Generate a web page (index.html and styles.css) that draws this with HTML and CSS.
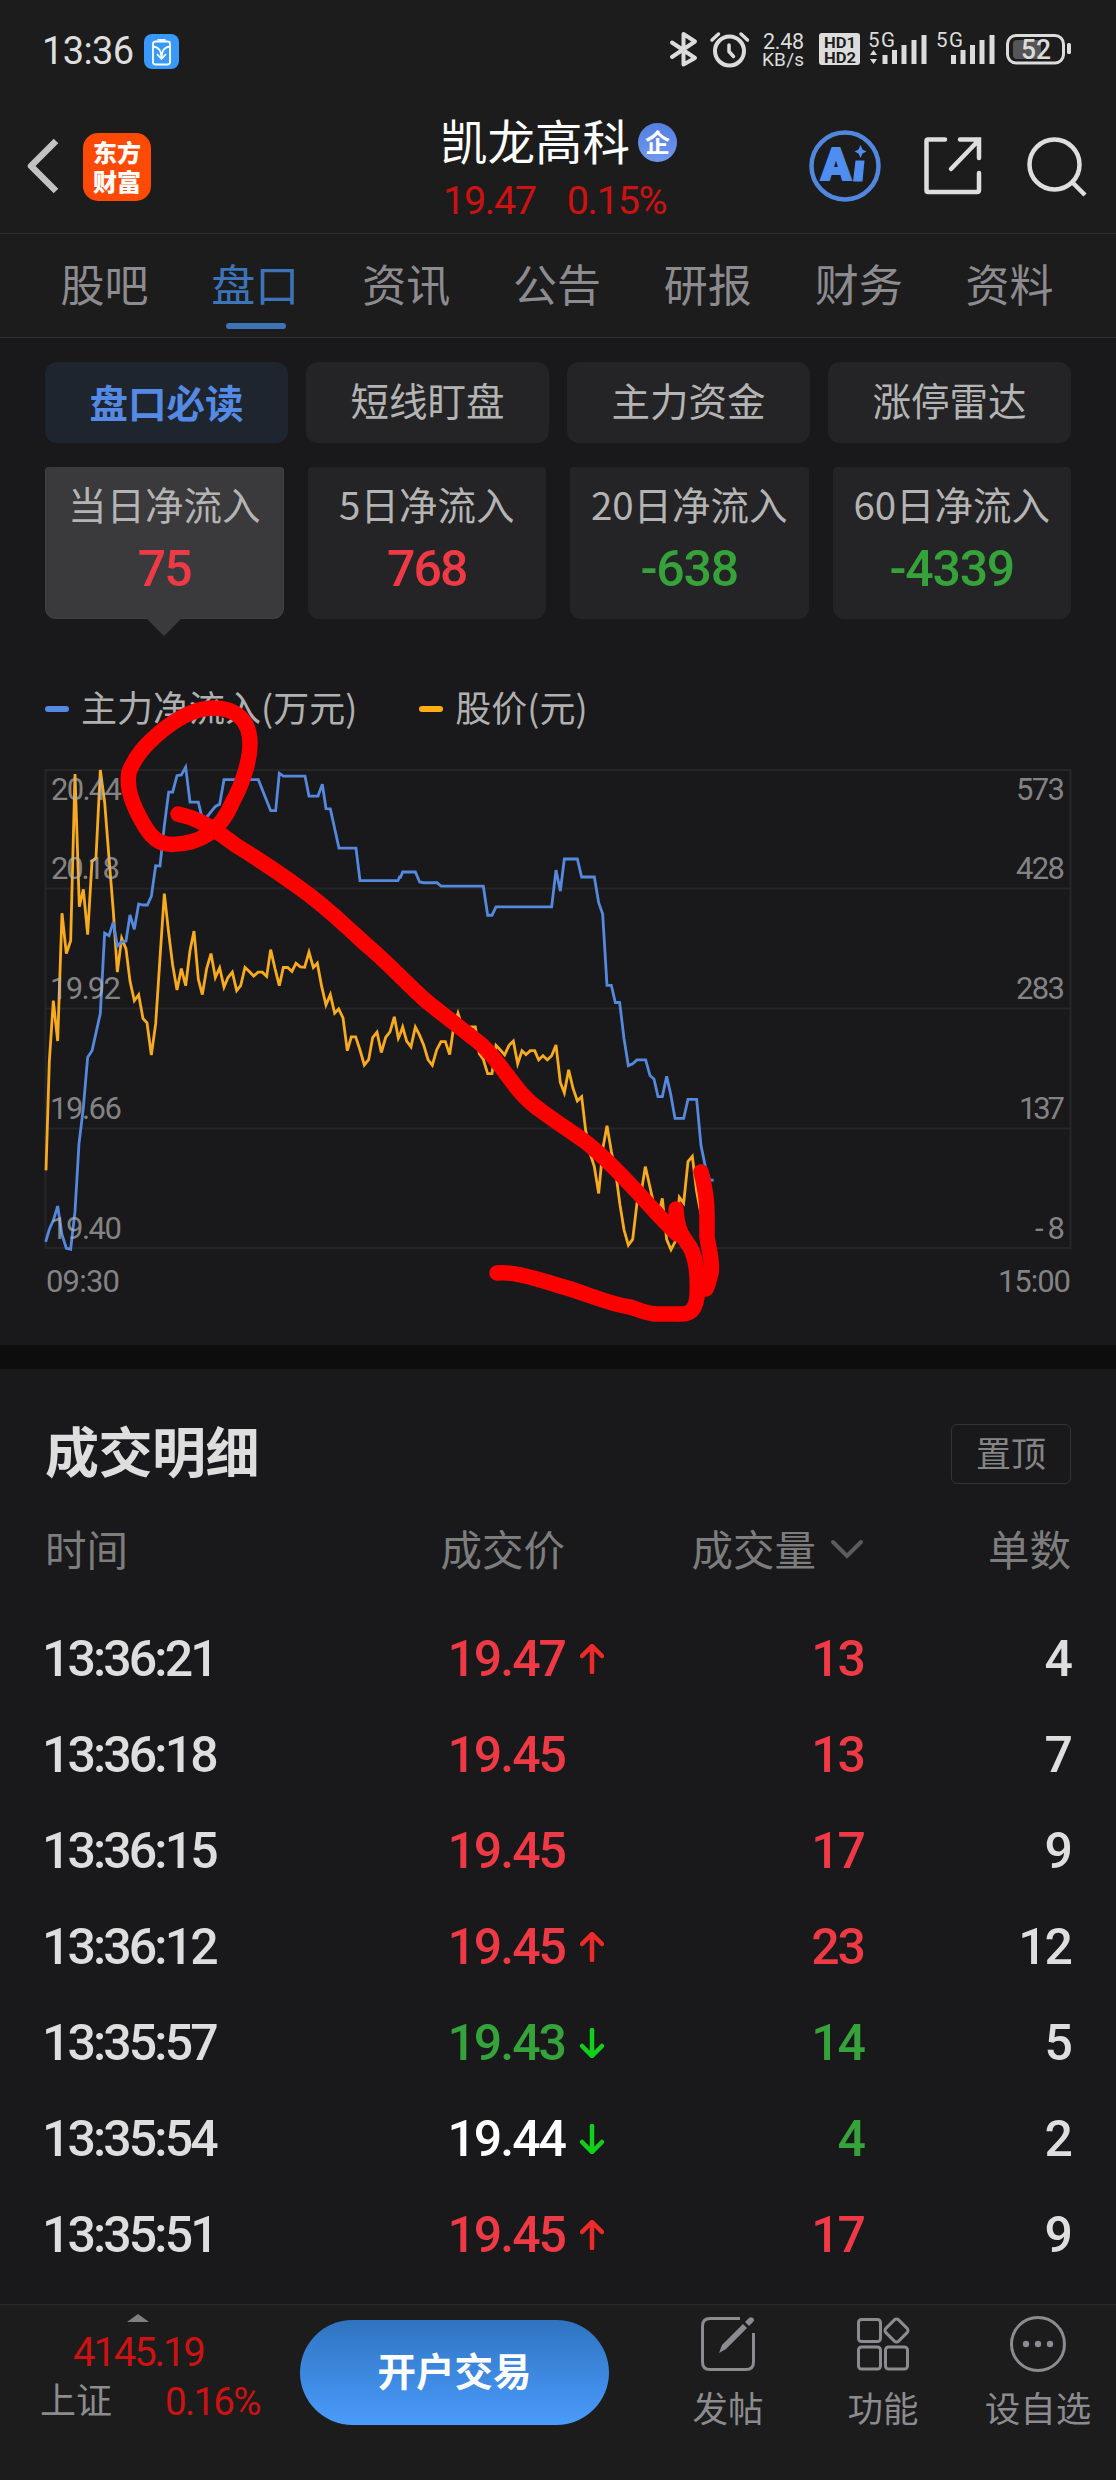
FILE: index.html
```html
<!DOCTYPE html>
<html lang="zh-CN">
<head>
<meta charset="utf-8">
<title>凯龙高科</title>
<link rel="stylesheet" href="styles.css">
</head>
<body>
<header class="top">
  <div class="status">
    <span class="clock">13:36</span>
    <svg class="charge" width="35" height="35" viewBox="0 0 35 35"><rect width="35" height="35" rx="8" fill="#3898fb"/><rect x="9" y="7.5" width="17" height="23" rx="2.5" fill="none" stroke="#fff" stroke-width="1.800"/><path d="M13.500 5.800h8M9.500 12.500c5 .5 8 4 8 12M25.500 12.500c-5 .5-8 4-8 12M13 20l4.500 5 4.500-5" fill="none" stroke="#fff" stroke-width="1.800"/></svg>
    <svg class="indicators" width="406" height="52" viewBox="668 19 406 52">
      <g fill="none" stroke="#dcdcdc" stroke-width="4" stroke-linecap="round" stroke-linejoin="round">
        <path d="M672 42.500L695 58L683.500 64.500V34L695 41.500L672 57"/>
        <circle cx="729.500" cy="51" r="14.500"/>
        <path d="M712 40l6.500-6M741 34l6.500 6M729 45v6.500l4.500 5" stroke-width="3.500"/>
        <rect x="1007.500" y="35.500" width="56" height="27.500" rx="8.500" stroke-width="3"/>
      </g>
      <rect x="1013" y="40" width="28" height="19" rx="4" fill="#555"/>
      <rect x="1067" y="43" width="4" height="11" rx="1.500" fill="#dcdcdc"/>
      <rect x="819" y="33" width="41" height="32" rx="3" fill="#dcdcdc"/>
      <g fill="#dcdcdc">
        <path d="M870 55l3.500-5 3.500 5zM870 59l3.500 5 3.500-5z"/>
        <path d="M882.500 55h5v9h-5zM892 50h5v14h-5zM901.500 45h5v19h-5zM911.500 40h5v24h-5zM921.500 35h5v29h-5z"/>
        <path d="M951 55h5v9h-5zM960.500 50h5v14h-5zM970 45h5v19h-5zM979.500 40h5v24h-5zM989.500 35h5v29h-5z"/>
        <text x="763" y="48.500" font-size="21.500" textLength="41">2.48</text>
        <text x="762" y="66" font-size="19" textLength="42">KB/s</text>
        <text x="868" y="46.500" font-size="20.500" textLength="27">5G</text>
        <text x="936" y="46.500" font-size="20.500" textLength="27">5G</text>
        <text x="1021" y="59" font-size="27.500" font-weight="500" textLength="30" lengthAdjust="spacingAndGlyphs">52</text>
      </g>
      <g fill="#1c1c1c" font-size="15" font-weight="700">
        <text x="824" y="47.500" textLength="32" lengthAdjust="spacingAndGlyphs">HD1</text>
        <text x="824" y="62.500" textLength="32" lengthAdjust="spacingAndGlyphs">HD2</text>
      </g>
    </svg>
  </div>
  <div class="titlebar">
    <svg class="back" width="36" height="60" viewBox="0 0 36 60"><path d="M33 5L8 30L33 55" fill="none" stroke="#c2c2c2" stroke-width="6.500" stroke-linejoin="round"/></svg>
    <div class="logo"><span>东方</span><span>财富</span></div>
    <div class="stock">
      <div class="name">凯龙高科<span class="badge">企</span></div>
      <div class="quote"><span>19.47</span><span>0.15%</span></div>
    </div>
    <svg class="ai" width="74" height="74" viewBox="0 0 74 74"><circle cx="37" cy="37" r="33.500" fill="none" stroke="#5187de" stroke-width="4.500"/><text x="13" y="51" font-size="44" font-weight="900" fill="#4f8df0" stroke="#4f8df0" stroke-width="2" textLength="30" lengthAdjust="spacingAndGlyphs">A</text><path d="M47.500 31.500h9l-2 21h-9.500zM52.500 16l2 4.500 4 2-4 2-2 4.500-2-4.500-4-2 4-2z" fill="#4f8df0"/></svg>
    <svg class="share" width="62" height="62" viewBox="0 0 62 62"><path d="M23 4.500H6Q4.500 4.500 4.500 6V55.500Q4.500 57 6 57H55Q57 57 57 55V38M38 4.500H57V23M55 7L29 34" fill="none" stroke="#dedede" stroke-width="4.500" stroke-linecap="round"/></svg>
    <svg class="search" width="64" height="64" viewBox="0 0 64 64"><circle cx="29.500" cy="29.500" r="25" fill="none" stroke="#dedede" stroke-width="4.500"/><path d="M48 48L60 60" stroke="#dedede" stroke-width="4.500"/></svg>
  </div>
  <nav class="tabs"><span>股吧</span><span class="on">盘口</span><span>资讯</span><span>公告</span><span>研报</span><span>财务</span><span>资料</span></nav>
</header>
<main>
  <div class="pills"><span class="on">盘口必读</span><span>短线盯盘</span><span>主力资金</span><span>涨停雷达</span></div>
  <div class="cards">
    <div class="card on"><span>当日净流入</span><b class="up">75</b></div>
    <div class="card"><span>5日净流入</span><b class="up">768</b></div>
    <div class="card"><span>20日净流入</span><b class="down">-638</b></div>
    <div class="card"><span>60日净流入</span><b class="down">-4339</b></div>
  </div>
  <div class="legend"><i class="flow"></i><span>主力净流入(万元)</span><i class="price"></i><span>股价(元)</span></div>
  <div class="chart">
    <svg width="1116" height="636" viewBox="0 700 1116 636">
      <path d="M45.500 770H1070.500V1248H45.500ZM45 888.500H1071M45 1008.500H1071M45 1128.500H1071" fill="none" stroke="#262628" stroke-width="2"/>
      <g class="series">
        <g stroke="#f8ab20">
          <polyline transform="translate(30 740) scale(.33333 .35714)" points="48,1205 58,900 70,730 83,843 96,485 109,598 122,562 135,95 148,467 160,418 173,545 186,340 198,330 211,84 224,175 237,330 250,480 262,650 275,555 288,585 300,675 313,730 326,713 339,780 351,792 364,882 377,795 390,610 403,430 416,540 428,630 441,700 454,640 467,688 480,590 492,535 505,670 517,713 530,640 543,598 556,665 569,638 582,692 594,665 607,650 620,702 632,688 645,637 658,648 671,661 684,650 697,650 710,662 722,587 735,640 748,688 760,637 773,637 786,648 798,625 811,635 824,636 837,594 850,637 862,625 875,690 888,742 901,713 914,765 926,753 939,778 952,870 964,831 977,831 990,868 1003,910 1016,895 1028,833 1041,818 1054,875 1067,833 1080,817 1093,775 1105,835 1110,825"/>
          <polyline transform="translate(400 740) scale(.33333 .38265)" points="0,770 8,750 20,787 33,802 46,750 58,770 71,797 84,835 97,850 110,810 123,788 136,788 149,822 161,750 174,714 187,750 200,765 213,750 226,750 238,820 250,835 263,872 276,872 288,798 301,810 314,823 327,798 340,787 353,846 366,812 378,822 391,812 404,812 416,836 429,825 442,836 455,825 468,797 481,895 493,922 506,862 519,910 532,943 545,932 557,1020 570,1080 583,1115 596,1185 609,1065 621,1008 634,1075 647,1130 660,1215 672,1280 685,1320 698,1305 711,1210 724,1180 736,1115 749,1165 762,1215 775,1240 787,1198 800,1305 813,1332 826,1310 838,1195 851,1210 864,1102 877,1088 890,1180 903,1240"/>
        </g>
        <g stroke="#5589dd">
          <polyline transform="translate(30 740) scale(.33333 .35714)" points="47,1405 58,1370 70,1345 83,1305 96,1385 109,1423 122,1426 135,1320 147,1130 160,1030 173,888 186,870 198,820 211,765 224,541 237,548 250,510 262,577 275,565 288,563 300,490 313,530 326,459 339,462 352,462 364,438 377,352 390,353 403,240 416,146 428,146 441,100 454,98 467,76 480,174 505,174 518,225 530,216 556,186 569,180 582,111 685,111 722,198 737,198 748,93 760,101 825,101 837,157 864,157 877,124 888,192 901,193 927,303 978,303 990,394 1104,394 1110,380"/>
          <polyline transform="translate(400 740) scale(.33333 .38265)" points="0,362 8,345 46,345 59,371 71,373 111,373 123,382 250,382 263,458 276,458 288,436 455,436 468,340 481,395 493,311 532,311 545,358 583,358 596,425 608,455 621,641 634,641 646,686 659,686 672,780 685,851 698,846 711,836 737,836 750,877 762,886 774,932 787,932 800,879 812,925 825,989 851,989 864,939 890,939 903,1060 916,1115 929,1150 941,1150"/>
        </g>
      </g>
      <g class="ticks">
        <text x="51" y="800" textLength="71">20.44</text><text x="51" y="879" textLength="69">20.18</text><text x="50" y="999" textLength="71">19.92</text><text x="50" y="1119" textLength="72">19.66</text><text x="50" y="1239" textLength="72">19.40</text>
        <text x="46" y="1292" textLength="74">09:30</text>
        <g text-anchor="end"><text x="1065" y="800" textLength="49">573</text><text x="1065" y="879" textLength="49">428</text><text x="1065" y="999" textLength="49">283</text><text x="1065" y="1119" textLength="46">137</text><text x="1065" y="1239" textLength="30">-8</text><text x="1071" y="1292" textLength="73">15:00</text></g>
      </g>
      <g class="marker">
        <path d="M129 772C136 754 147 744 158 734C178 717 196 708 213 708C238 708 250 722 250 744C250 762 241 787 233 801C220 832 200 844 172 844.500C152 845 144 825 137 812C129 795 127 784 129 772"/>
        <path d="M178 814C200 818 216 831 237 846C258 859 275 870 297 886C330 909 347 928 370 948C390 965 405 982 425 1000C446 1017 462 1029 482 1045C505 1067 515 1093 540 1110C555 1121 570 1131 587 1143C625 1174 650 1209 677 1234"/>
        <path d="M676 1209C677 1232 684 1238 690 1247C698 1262 698 1280 697 1297C695 1311 690 1314 680 1314H655C645 1313 637 1309 630 1307C610 1304 590 1295 567 1288C540 1280 515 1271 497 1273"/>
        <path d="M701 1172C706 1190 707 1200 707 1215V1237C709 1250 713 1262 711 1273C709 1281 708 1285 706 1289"/>
      </g>
    </svg>
  </div>
  <section class="trades">
    <div class="heading"><h2>成交明细</h2><span class="pin">置顶</span></div>
    <div class="row head"><span>时间</span><span>成交价</span><span></span><span>成交量<svg width="34" height="20" viewBox="0 0 34 20"><path d="M3 3L17 17L31 3" fill="none" stroke="#5c5c5c" stroke-width="4" stroke-linecap="round"/></svg></span><span>单数</span></div>
    <div class="row"><span>13:36:21</span><span class="up">19.47</span><svg class="arrow rise" viewBox="0 0 24 30"><path d="M12 28V3M2 12L12 2L22 12"/></svg><span class="up">13</span><span>4</span></div>
    <div class="row"><span>13:36:18</span><span class="up">19.45</span><i></i><span class="up">13</span><span>7</span></div>
    <div class="row"><span>13:36:15</span><span class="up">19.45</span><i></i><span class="up">17</span><span>9</span></div>
    <div class="row"><span>13:36:12</span><span class="up">19.45</span><svg class="arrow rise" viewBox="0 0 24 30"><path d="M12 28V3M2 12L12 2L22 12"/></svg><span class="up">23</span><span>12</span></div>
    <div class="row"><span>13:35:57</span><span class="down">19.43</span><svg class="arrow fall" viewBox="0 0 24 30"><path d="M12 2V27M2 18L12 28L22 18"/></svg><span class="down">14</span><span>5</span></div>
    <div class="row"><span>13:35:54</span><span class="flat">19.44</span><svg class="arrow fall" viewBox="0 0 24 30"><path d="M12 2V27M2 18L12 28L22 18"/></svg><span class="down">4</span><span>2</span></div>
    <div class="row"><span>13:35:51</span><span class="up">19.45</span><svg class="arrow rise" viewBox="0 0 24 30"><path d="M12 28V3M2 12L12 2L22 12"/></svg><span class="up">17</span><span>9</span></div>
  </section>
</main>
<footer class="bar">
  <div class="index"><svg width="22" height="8" viewBox="0 0 22 8"><path d="M0 8L11 0L22 8Z" fill="#808082"/></svg><div class="value">4145.19</div><div class="change"><span>上证</span><span class="pct">0.16%</span></div></div>
  <a class="open">开户交易</a>
  <div class="action post"><svg width="56" height="56" viewBox="0 0 56 56"><path d="M40 2.500H10Q2.500 2.500 2.500 10V46Q2.500 53.500 10 53.500H46Q53.500 53.500 53.500 46V17" fill="none" stroke="#8c8b90" stroke-width="3"/><path d="M19 37L22 29L43 8L47 12L26 33ZM45 6L49 2Q51 .5 53 2Q55 4 53 6L49 10Z" fill="#8c8b90"/></svg><span>发帖</span></div>
  <div class="action func"><svg width="56" height="56" viewBox="0 0 56 56"><g fill="none" stroke="#8c8b90" stroke-width="3"><rect x="3.500" y="3.500" width="22" height="22" rx="3"/><rect x="3.500" y="31" width="22" height="22" rx="3"/><rect x="30.500" y="31" width="22" height="22" rx="3"/><rect x="32.500" y="5.500" width="18" height="18" rx="3" transform="rotate(45 41.500 14.500)"/></g></svg><span>功能</span></div>
  <div class="action watch"><svg width="56" height="56" viewBox="0 0 56 56"><circle cx="28" cy="28" r="26.500" fill="none" stroke="#8c8b90" stroke-width="3"/><g fill="#8c8b90"><circle cx="16" cy="28" r="3.200"/><circle cx="28" cy="28" r="3.200"/><circle cx="40" cy="28" r="3.200"/></g></svg><span>设自选</span></div>
</footer>
</body>
</html>
```
FILE: styles.css
```css
* { box-sizing: border-box; }
body {
  margin: 0;
  width: 1116px;
  height: 2480px;
  overflow: hidden;
  display: flex;
  flex-direction: column;
  background: #19191b;
  color: #dedede;
  font-family: "Noto Sans CJK SC", sans-serif;
}
svg { display: block; flex: none; }
svg text, .clock, .quote, .card b, .row:not(.head), .value, .pct { font-family: Roboto, "Noto Sans CJK SC", sans-serif; }
i { font-style: normal; }

.top { background: #1c1c1c; height: 338px; border-bottom: 1px solid #303032; }
.status { height: 100px; display: flex; align-items: flex-start; padding-left: 42px; }
.clock { font-size: 38px; line-height: 56px; padding-top: 23px; width: 102px; letter-spacing: -.600px; }
.charge { margin-top: 34px; }
.indicators { margin: 19px 0 0 489px; }

.titlebar { height: 134px; border-bottom: 1px solid #303032; display: flex; padding-left: 23px; }
.back { margin-top: 36px; }
.logo {
  width: 68px; height: 68px; margin: 33px 0 0 24px; padding-top: 4px;
  border-radius: 15px; background: #ff4a05; color: #fff;
  font-size: 24px; font-weight: 900; line-height: 29px; text-align: center;
  display: flex; flex-direction: column;
}
.stock { margin-left: 289px; width: 260px; padding-top: 10px; }
.name { display: flex; align-items: center; height: 60px; font-size: 47.500px; line-height: 60px; color: #fff; white-space: nowrap; }
.badge {
  width: 39px; height: 39px; margin: 5px 0 0 8px; border-radius: 50%;
  background: linear-gradient(#557fe0, #7098ec); font-size: 25px; font-weight: 700; line-height: 36px; text-align: center;
}
.quote { display: flex; gap: 31px; font-size: 39.500px; line-height: 50px; padding: 6px 0 0 3px; color: #cc1212; letter-spacing: -1.300px; white-space: nowrap; }
.ai { margin: 29px 0 0 108px; }
.share { margin: 35px 0 0 40px; }
.search { margin: 35px 0 0 41px; }

.tabs { height: 103px; padding: 0 31px 0 29px; display: flex; }
.tabs span { position: relative; flex: 1; text-align: center; font-size: 44px; line-height: 98px; color: #8c8b90; }
.tabs .on { color: #3d74b8; }
.tabs .on::after { content: ""; position: absolute; left: 46px; top: 89px; width: 60px; height: 6px; border-radius: 3px; background: #3d74b8; }

.pills { display: grid; grid-template-columns: repeat(4, 243px); gap: 18px; padding: 24px 45px 0; }
.pills span { height: 81px; border-radius: 12px; background: #242426; color: #b4b4b4; font-size: 38.500px; line-height: 75px; text-align: center; }
.pills .on { background: #1e252e; color: #558ae4; font-weight: 700; line-height: 78px; }

.cards { display: flex; justify-content: space-between; padding: 24px 45px 0; }
.card { position: relative; width: 238.500px; height: 152px; border-radius: 4px 4px 11px 11px; background: #242426; text-align: center; display: flex; flex-direction: column; white-space: nowrap; }
.card.on { background: #3a3a3c; border: 1px solid #424244; border-top: 0; }
.card.on::after { content: ""; position: absolute; left: 100px; top: 151px; border: 18px solid transparent; border-top-color: #3a3a3c; border-bottom: 0; }
.card span { font-size: 38.500px; line-height: 60px; padding-top: 6px; color: #b4b4b4; }
.card b { font-size: 50px; font-weight: 500; line-height: 60px; padding-top: 6px; letter-spacing: -2px; }
.card .down { letter-spacing: -1.200px; }
.up { color: #ef3a45; }
.down { color: #35a33a; }
.flat { color: #fff; }

.legend { display: flex; align-items: center; height: 60px; margin-top: 58px; padding-left: 45px; font-size: 36px; line-height: 56px; color: #b0b0b0; white-space: nowrap; }
.legend i { width: 24px; height: 6px; margin: 4px 12px 0 0; border-radius: 3px; background: #558ae4; }
.legend span { margin-top: -2px; }
.legend .price { background: #ffad14; margin-left: 62px; }
.chart { height: 645px; margin-top: -37px; }
.series { fill: none; stroke-width: 2.800px; }
.series polyline { vector-effect: non-scaling-stroke; }
.ticks { font-size: 31px; fill: #b4b4b4; fill-opacity: .7; }
.marker { fill: none; stroke: #f00; stroke-width: 15.500px; stroke-linecap: round; stroke-linejoin: round; }

.trades { border-top: 24px solid #0d0d0e; padding: 0 45px; }
.heading { display: flex; justify-content: space-between; height: 132px; }
.heading h2 { margin: 0; font-size: 54px; font-weight: 600; line-height: 80px; padding-top: 41px; letter-spacing: -.500px; }
.pin { width: 120px; height: 60px; margin-top: 55px; border: 1px solid #333335; border-radius: 6px; font-size: 35px; line-height: 53px; text-align: center; color: #858585; }
.row { height: 96px; display: grid; grid-template-columns: 300px 220px 60px 239px 207px; align-items: center; font-size: 50px; font-weight: 500; line-height: 80px; letter-spacing: -2.900px; white-space: nowrap; }
.row span { text-align: right; }
.row span:not(:first-child) { letter-spacing: -2px; }
.row span:first-child { text-align: left; margin-left: -3px; }
.row.head { height: 90px; margin-bottom: 20px; font-size: 41.500px; font-weight: 400; color: #7d7d7d; }
.row.head span, .row.head span:first-child { display: flex; justify-content: flex-end; align-items: center; margin-left: 0; letter-spacing: 0; margin-top: 3px; }
.row.head span:first-child { justify-content: flex-start; }
.row.head svg { margin: 2px 0 0 14px; }
.arrow { width: 24px; height: 30px; margin: 0 0 0 15px; fill: none; stroke-width: 4.500px; stroke-linecap: round; }
.rise { stroke: #ee2b28; }
.fall { stroke: #0fd11a; }

.bar { position: absolute; left: 0; top: 2304px; width: 1116px; height: 176px; background: #1c1c1c; border-top: 1px solid #29292a; }
.bar { display: flex; }
.index { width: 300px; padding: 9px 0 0 40px; color: #cc1212; }
.index svg { margin-left: 87px; }
.value { font-size: 40px; line-height: 50px; padding: 6px 0 0 33px; letter-spacing: -2.100px; height: 51px; }
.change { display: flex; font-size: 36px; line-height: 50px; white-space: nowrap; }
.change span { color: #8c8b90; }
.change .pct { color: #cc1212; margin: 4px 0 0 53px; font-size: 38.500px; letter-spacing: -1.700px; }
.open { width: 309px; height: 105px; margin-top: 15px; border-radius: 53px; background: linear-gradient(#3074c0, #4a9bfc); color: #fff; font-size: 38.500px; font-weight: 700; line-height: 98px; text-align: center; }
.action { display: flex; flex-direction: column; align-items: center; width: 156px; padding-top: 11px; font-size: 35.500px; line-height: 50px; color: #8c8b90; }
.action span { margin-top: 10px; }
.post { margin-left: 41px; }
.func { margin-left: -1px; }
.watch { margin-left: -1px; }
```
